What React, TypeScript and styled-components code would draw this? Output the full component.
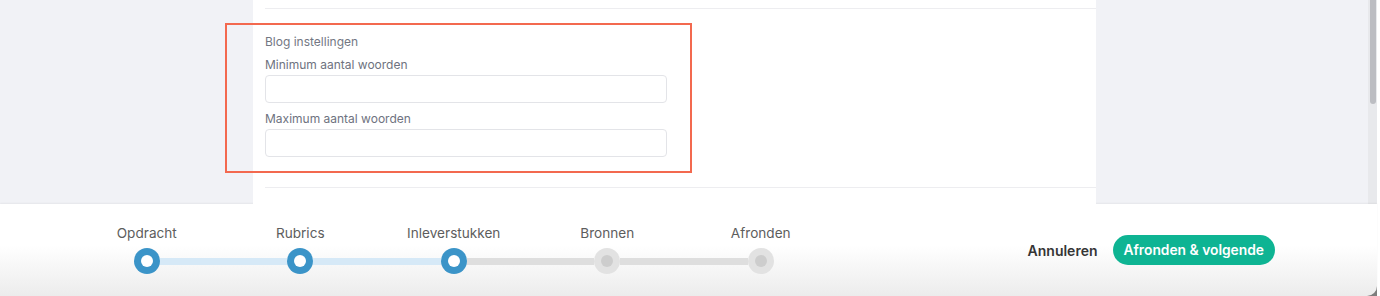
import React from "react";
import styled, { createGlobalStyle } from "styled-components";

const Global = createGlobalStyle`
  html, body { margin: 0; padding: 0; background: #ffffff; }
  body { font-family: Inter, "Noto Sans", "Liberation Sans", sans-serif; -webkit-font-smoothing: antialiased; }
  * { box-sizing: border-box; }
`;

const Window = styled.div`
  width: 1377px;
  height: 296px;
  display: flex;
  flex-direction: column;
  background: #7d7d7d;
`;

const Top = styled.div`
  height: 204px;
  display: flex;
  background: #f1f2f6;
  overflow: hidden;
`;

const Scroller = styled.div`
  flex: 1;
  position: relative;
  padding-left: 253px;
`;

const Card = styled.div`
  width: 843px;
  height: 100%;
  background: #ffffff;
  padding: 8px 0 0 12px;
  display: flex;
  flex-direction: column;
`;

const Divider = styled.div`
  height: 1px;
  background: #ededf0;
`;

const Section = styled.div`
  padding: 24px 0 30px;
  display: flex;
  flex-direction: column;
  width: 402px;
`;

const SectionTitle = styled.div`
  font-size: 12px;
  line-height: 17px;
  color: #737783;
  margin-bottom: 7px;
`;

const Field = styled.div`
  display: flex;
  flex-direction: column;
  gap: 2px;
  & + & { margin-top: 8px; }
`;

const Label = styled.label`
  font-size: 12px;
  line-height: 16px;
  color: #6e7280;
`;

const Input = styled.input`
  height: 28px;
  width: 100%;
  border: 1px solid #e3e4e8;
  border-radius: 4px;
  background: #fff;
  outline: none;
`;

const Highlight = styled.div`
  position: absolute;
  left: 225px;
  top: 23px;
  width: 467px;
  height: 150px;
  border: 2px solid #f3694f;
  pointer-events: none;
`;

const ScrollTrack = styled.div`
  width: 9px;
  background: #e8e9ec;
  padding: 0 1px 0 2px;
`;

const ScrollThumb = styled.div`
  height: 104px;
  background: #bcbdc2;
  border-radius: 0 0 3px 3px;
`;

const Footer = styled.div`
  flex: 1;
  background: linear-gradient(180deg, #ffffff 0%, #ffffff 45%, #ececec 100%);
  border-bottom-right-radius: 10px;
  box-shadow: 0 -1px 2px rgba(0, 0, 0, 0.05);
  display: flex;
  align-items: flex-start;
  justify-content: space-between;
  padding: 21px 102px 0 70px;
`;

const Stepper = styled.div`
  display: flex;
`;

const Step = styled.div`
  width: 153.5px;
  display: flex;
  flex-direction: column;
  align-items: center;
  gap: 6px;
`;

const StepLabel = styled.div`
  font-size: 13.6px;
  line-height: 17px;
  color: #5d5d5d;
  white-space: nowrap;
`;

const MarkerRow = styled.div`
  width: 100%;
  height: 26px;
  display: flex;
  align-items: center;
`;

const Half = styled.div<{ $tone: "blue" | "gray" | "none" }>`
  flex: 1;
  height: 7px;
  background: ${(p) =>
    p.$tone === "blue" ? "#d6e9f7" : p.$tone === "gray" ? "#dedede" : "transparent"};
`;

const Circle = styled.div<{ $active: boolean }>`
  width: 26px;
  height: 26px;
  border-radius: 50%;
  flex-shrink: 0;
  display: flex;
  align-items: center;
  justify-content: center;
  background: ${(p) => (p.$active ? "#3b94c8" : "#e2e2e2")};
`;

const Dot = styled.div<{ $active: boolean }>`
  width: 12px;
  height: 12px;
  border-radius: 50%;
  background: ${(p) => (p.$active ? "#ffffff" : "#cdcdcd")};
`;

const Actions = styled.div`
  display: flex;
  align-items: center;
  gap: 15px;
  margin-top: 10px;
`;

const CancelButton = styled.button`
  border: none;
  background: none;
  padding: 0;
  font-family: inherit;
  font-size: 14px;
  font-weight: 600;
  color: #353535;
  cursor: pointer;
`;

const PrimaryButton = styled.button`
  height: 30px;
  border: none;
  border-radius: 15px;
  background: #0eb493;
  color: #ffffff;
  padding: 0 11px;
  font-family: inherit;
  font-size: 13.8px;
  font-weight: 600;
  cursor: pointer;
`;

const steps = ["Opdracht", "Rubrics", "Inleverstukken", "Bronnen", "Afronden"];
const current = 2;

export default function App() {
  return (
    <>
      <Global />
      <Window>
        <Top>
          <Scroller>
            <Card>
              <Divider />
              <Section>
                <SectionTitle>Blog instellingen</SectionTitle>
                <Field>
                  <Label>Minimum aantal woorden</Label>
                  <Input />
                </Field>
                <Field>
                  <Label>Maximum aantal woorden</Label>
                  <Input />
                </Field>
              </Section>
              <Divider />
            </Card>
            <Highlight />
          </Scroller>
          <ScrollTrack>
            <ScrollThumb />
          </ScrollTrack>
        </Top>
        <Footer>
          <Stepper>
            {steps.map((s, i) => {
              const active = i <= current;
              const left = i === 0 ? "none" : i <= current ? "blue" : "gray";
              const right = i === steps.length - 1 ? "none" : i < current ? "blue" : "gray";
              return (
                <Step key={s}>
                  <StepLabel>{s}</StepLabel>
                  <MarkerRow>
                    <Half $tone={left} />
                    <Circle $active={active}>
                      <Dot $active={active} />
                    </Circle>
                    <Half $tone={right} />
                  </MarkerRow>
                </Step>
              );
            })}
          </Stepper>
          <Actions>
            <CancelButton>Annuleren</CancelButton>
            <PrimaryButton>Afronden &amp; volgende</PrimaryButton>
          </Actions>
        </Footer>
      </Window>
    </>
  );
}
